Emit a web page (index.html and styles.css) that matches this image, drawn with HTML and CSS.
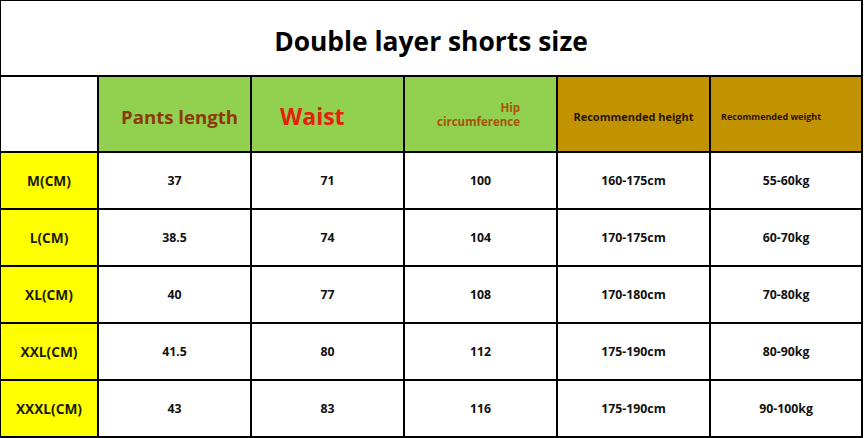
FILE: index.html
```html
<!DOCTYPE html>
<html>
<head>
<meta charset="utf-8">
<link rel="stylesheet" href="styles.css">
</head>
<body>
<div class="chart">
  <div class="cell title">Double layer shorts size</div>

  <div class="cell corner"></div>
  <div class="cell head green pants">Pants length</div>
  <div class="cell head green waist">Waist</div>
  <div class="cell head green hip"><div class="hipbox"><span class="hipline">Hip</span><span class="hipline">circumference</span></div></div>
  <div class="cell head gold rheight">Recommended height</div>
  <div class="cell head gold rweight">Recommended weight</div>

  <div class="cell size">M(CM)</div>
  <div class="cell val">37</div><div class="cell val">71</div><div class="cell val">100</div><div class="cell val">160-175cm</div><div class="cell val">55-60kg</div>

  <div class="cell size">L(CM)</div>
  <div class="cell val">38.5</div><div class="cell val">74</div><div class="cell val">104</div><div class="cell val">170-175cm</div><div class="cell val">60-70kg</div>

  <div class="cell size">XL(CM)</div>
  <div class="cell val">40</div><div class="cell val">77</div><div class="cell val">108</div><div class="cell val">170-180cm</div><div class="cell val">70-80kg</div>

  <div class="cell size">XXL(CM)</div>
  <div class="cell val">41.5</div><div class="cell val">80</div><div class="cell val">112</div><div class="cell val">175-190cm</div><div class="cell val">80-90kg</div>

  <div class="cell size">XXXL(CM)</div>
  <div class="cell val">43</div><div class="cell val">83</div><div class="cell val">116</div><div class="cell val">175-190cm</div><div class="cell val">90-100kg</div>
</div>
</body>
</html>
```

FILE: styles.css
```css
html, body {
  margin: 0;
  padding: 0;
  background: #ffffff;
}

.chart {
  width: 863px;
  height: 438px;
  box-sizing: border-box;
  padding: 1px 2px 2px 1px;
  background: #000000;
  display: grid;
  grid-template-columns: 96px 151px 151px 151px 151px 150px;
  grid-template-rows: 74px 74px 55px 55px 55px 55px 55px;
  gap: 2px;
  font-family: "Open Sans", "Noto Sans", sans-serif;
  font-weight: 700;
}

.cell {
  background: #ffffff;
  display: flex;
  align-items: center;
  justify-content: center;
  color: #111111;
}

.title {
  grid-column: 1 / -1;
  font-size: 26.4px;
  color: #000000;
  padding-top: 6px;
  box-sizing: border-box;
}

.head {
  padding-top: 4px;
  box-sizing: border-box;
}

.green { background: #92d050; }
.gold { background: #c29300; }

.pants {
  justify-content: flex-start;
  padding-left: 22px;
  font-size: 18.6px;
  color: #8a3a0a;
}

.waist {
  justify-content: flex-start;
  padding-left: 28px;
  font-size: 23px;
  color: #e2210f;
}

.hip {
  justify-content: flex-end;
  padding-right: 36px;
  padding-top: 2px;
  color: #a8530a;
}

.hipbox {
  display: flex;
  flex-direction: column;
  align-items: flex-end;
  font-size: 11.5px;
  line-height: 14px;
}

.hipline {
  display: block;
  height: 14px;
}

.rheight {
  font-size: 11px;
  color: #2a1500;
}

.rweight {
  justify-content: flex-start;
  padding-left: 10px;
  font-size: 9px;
  color: #2a1500;
}

.size {
  background: #ffff00;
  font-size: 13.7px;
  color: #1a1a00;
}

.val {
  font-size: 12.3px;
  color: #111111;
}
```
